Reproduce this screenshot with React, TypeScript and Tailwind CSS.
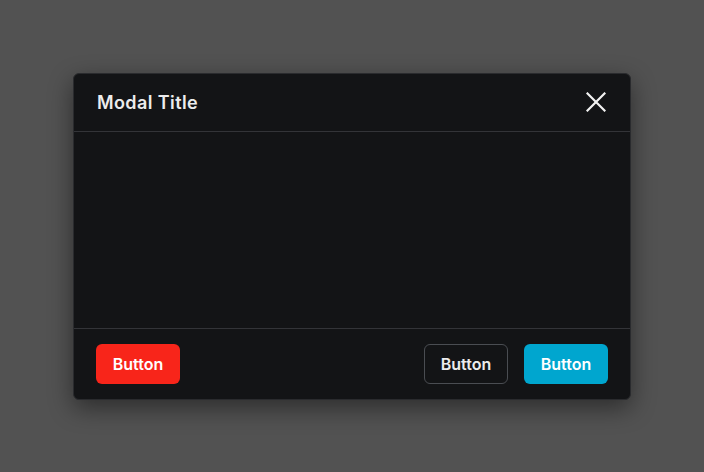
export default function App() {
  return (
    <div className="flex h-screen w-full items-center justify-center bg-[#525252] font-['Inter']">
      <div className="flex w-[558px] flex-col rounded-md border border-[#2a2b2e] bg-[#131416] shadow-[0_8px_24px_rgba(0,0,0,0.45)]">
        <div className="flex h-[58px] items-center justify-between border-b border-[#333438] pl-[23px] pr-[24px]">
          <h2 className="text-[18px] font-semibold tracking-[0.4px] text-[#ececed]">Modal Title</h2>
          <button type="button" className="flex h-5 w-5 items-center justify-center text-[#f2f2f2]">
            <svg width="20" height="20" viewBox="0 0 20 20" fill="none" stroke="currentColor" strokeWidth="2.2" strokeLinecap="square">
              <path d="M1.5 1.5L18.5 18.5M18.5 1.5L1.5 18.5" />
            </svg>
          </button>
        </div>
        <div className="h-[196px]" />
        <div className="flex items-center justify-between border-t border-[#333438] px-[22px] py-[15px]">
          <button type="button" className="h-10 w-[84px] rounded-md bg-[#f8251a] text-base font-semibold text-white">
            Button
          </button>
          <div className="flex gap-4">
            <button type="button" className="h-10 w-[84px] rounded-md border border-[#4a4d52] text-base font-semibold text-[#ececed]">
              Button
            </button>
            <button type="button" className="h-10 w-[84px] rounded-md bg-[#00a6cf] text-base font-semibold text-white">
              Button
            </button>
          </div>
        </div>
      </div>
    </div>
  );
}
